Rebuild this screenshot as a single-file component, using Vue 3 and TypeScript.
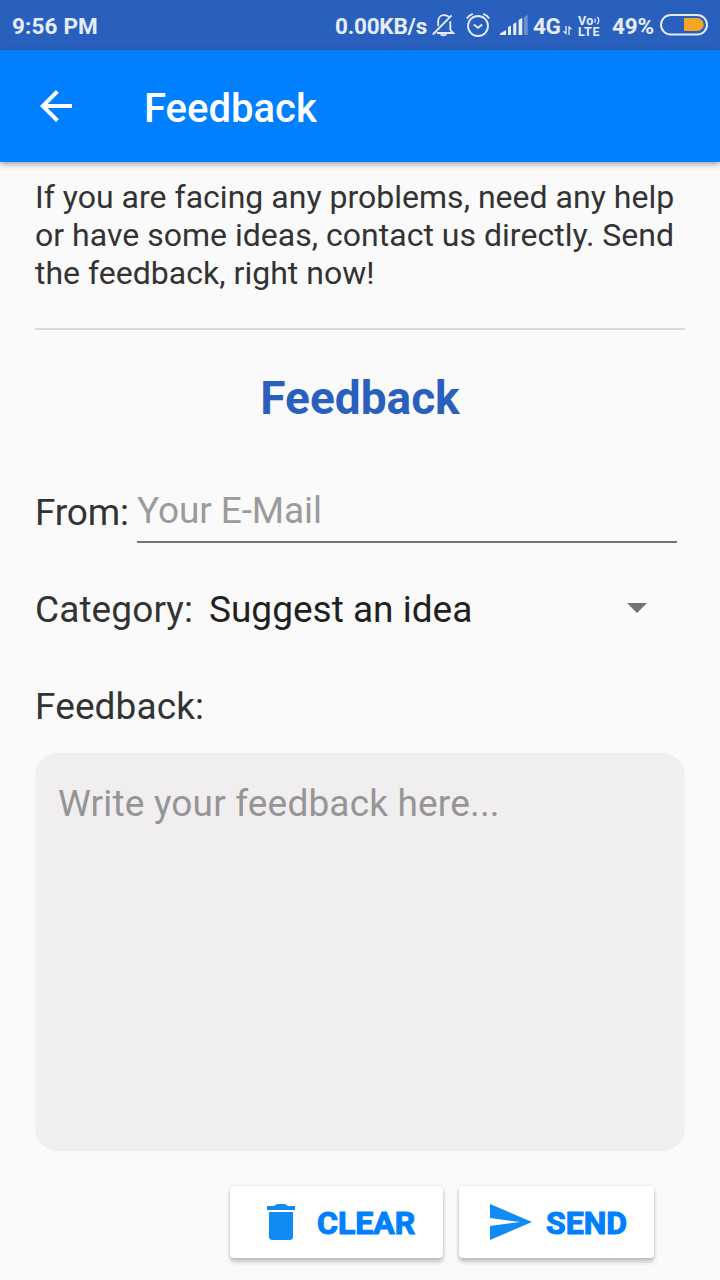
<script setup lang="ts">
import { ref } from 'vue'

const email = ref('')
const message = ref('')
const category = ref('Suggest an idea')

function clearForm(): void {
  email.value = ''
  message.value = ''
}
</script>

<template>
  <div class="screen">
    <div class="status">
      <span class="time">9:56 PM</span>
      <span class="speed">0.00KB/s</span>
      <svg class="bell" width="24" height="26" viewBox="0 0 24 26" fill="none" stroke="#e6ecf8" stroke-width="1.8">
        <path d="M17.2 4.2C15.8 2.8 14 2.2 12 2.2 8.300 2.200 6.200 5 6.200 8.500V13M4.800 20H21.300L18.300 16.800V8.200" />
        <path d="M.8 21.500L19.600 2.300" />
        <path d="M8.500 21.800H14.500Q11.500 24 8.500 21.800Z" fill="#e6ecf8" stroke-width="1" />
      </svg>
      <svg class="alarm" width="24" height="26" viewBox="0 0 24 26" fill="none" stroke="#e6ecf8" stroke-width="1.8">
        <circle cx="12" cy="14" r="10" />
        <path d="M.8 6.500Q2.800 3.200 6.800 1.900M23.200 6.500Q21.200 3.200 17.200 1.900M7.800 12.500L12 15.800 16.200 12.500" />
      </svg>
      <svg class="signal" width="28" height="20" viewBox="0 0 28 20" fill="#e6ecf8">
        <path d="M0 20V18.500L6 15V20ZM8 20V12L11 10.500V20ZM13.200 20V9L16.300 7.200V20ZM18.600 20V5L22.300 2.800V20Z" />
        <path d="M24 20V2L27.700 0V20Z" opacity=".35" />
      </svg>
      <span class="network">4G</span>
      <svg class="updown" width="9" height="9" viewBox="0 0 9 9" fill="none" stroke="#e6ecf8" stroke-width="1.300">
        <path d="M3 0V7.500L.5 5.300M6 9V1L8.500 3.300" />
      </svg>
      <span class="volte">
        <span class="vo">Vo<svg width="7" height="9" viewBox="0 0 7 9" fill="none" stroke="#e6ecf8" stroke-width="1.200"><path d="M.7 2.500Q1.900 4.500 .7 6.500M3.300 .8Q6.300 4.500 3.300 8.200" /></svg></span>
        <span class="lte">LTE</span>
      </span>
      <span class="percent">49%</span>
      <svg class="battery" width="48" height="22" viewBox="0 0 48 22">
        <rect x="1" y="1" width="46" height="19.500" rx="9.750" fill="none" stroke="#e6ecf8" stroke-width="2" />
        <path d="M25 4H37.200A6.500 6.500 0 0 1 37.200 17H25A1 1 0 0 1 24 16V5A1 1 0 0 1 25 4Z" fill="#f6a623" />
      </svg>
    </div>

    <header class="toolbar">
      <svg class="back" width="32" height="32" viewBox="4 4 16 16" fill="#fff">
        <path d="M20 11H7.830l5.590-5.590L12 4l-8 8 8 8 1.410-1.410L7.830 13H20v-2z" />
      </svg>
      <h1>Feedback</h1>
    </header>

    <main>
      <p class="intro">If you are facing any problems, need any help<br>or have some ideas, contact us directly. Send<br>the feedback, right now!</p>
      <h2>Feedback</h2>
      <label class="row from">
        <span>From:</span>
        <input v-model="email" type="email" placeholder="Your E-Mail">
      </label>
      <div class="row category">
        <span class="category-label">Category:</span>
        <span class="value">{{ category }}</span>
        <svg width="20" height="10" viewBox="0 0 20 10"><path d="M0 0H20L10 10Z" fill="#737373" /></svg>
      </div>
      <label class="row message-label" for="message">Feedback:</label>
      <textarea id="message" v-model="message" placeholder="Write your feedback here..." />
      <div class="actions">
        <button class="clear" type="button" @click="clearForm">
          <svg width="28" height="36" viewBox="0 0 28 36" fill="#118bf4">
            <path d="M0 2H7Q9 0 11 0H17Q19 0 21 2H28V6H0ZM2 8H26V32.500Q26 36 22.500 36H5.500Q2 36 2 32.500Z" />
          </svg>
          <span>CLEAR</span>
        </button>
        <button class="send" type="button">
          <svg width="42" height="36" viewBox="0 0 42 36" fill="#118bf4">
            <path d="M0 0L42 18 0 36V22L30 18 0 14Z" />
          </svg>
          <span>SEND</span>
        </button>
      </div>
    </main>
  </div>
</template>

<style>
body { margin: 0; background: #fafafa; }
</style>

<style scoped>
.screen {
  width: 720px;
  height: 1280px;
  overflow: hidden;
  background: #fafafa;
  color: #333;
  font-family: Roboto, sans-serif;
}
.status {
  height: 50px;
  box-sizing: border-box;
  padding: 0 12px;
  display: flex;
  align-items: center;
  background: #2a60bd;
  color: #e6ecf8;
  font-size: 22.5px;
  font-weight: 700;
  line-height: 50px;
  white-space: nowrap;
}
.status svg { flex: none; }
.time { flex: none; width: 323px; padding-top: 1px; letter-spacing: .15px; }
.speed { flex: none; width: 97px; padding-top: 1px; letter-spacing: -.22px; }
.bell { margin-top: 1px; }
.alarm { margin-left: 9.5px; }
.signal { align-self: flex-start; margin: 15px 0 0 10.5px; }
.network { width: 30px; margin-left: 5px; padding-top: 1px; flex: none; letter-spacing: -.3px; }
.updown { margin-top: 10px; }
.volte { width: 24px; margin: 1px 0 0 6px; flex: none; font-size: 12.5px; line-height: 11px; }
.vo, .lte { display: block; height: 11px; }
.vo { letter-spacing: .3px; }
.vo svg { margin-left: .5px; }
.lte { letter-spacing: .7px; }
.percent { width: 42px; margin-left: 10px; padding-top: 1px; flex: none; letter-spacing: -.1px; }
.battery { margin-left: 6px; }
.toolbar {
  position: relative;
  height: 112px;
  display: flex;
  align-items: center;
  padding-left: 40px;
  background: #0080ff;
  color: #fff;
  box-shadow: 0 2px 6px rgba(0, 0, 0, .38);
}
.toolbar h1 { margin: 5px 0 0 72px; font-size: 40px; font-weight: 500; line-height: 49px; }
main { padding: 16px 35px 0; }
.intro {
  height: 150px;
  margin: 0;
  border-bottom: 2px solid #dadada;
  font-size: 32px;
  line-height: 38px;
  letter-spacing: .015px;
  white-space: nowrap;
}
h2 { margin: 41px 0 0; color: #2a60bd; font-size: 46px; font-weight: 700; line-height: 54px; text-align: center; }
.row { display: flex; font-size: 37px; line-height: 44px; white-space: nowrap; }
.from { height: 78px; margin-top: 40px; align-items: center; }
.from span { width: 102px; padding-top: 17px; letter-spacing: -.15px; }
input {
  width: 540px;
  height: 60px;
  align-self: flex-end;
  box-sizing: border-box;
  padding: 0 0 3px;
  border: 0;
  border-bottom: 2px solid #737373;
  border-radius: 0;
  outline: 0;
  background: transparent;
  color: #222;
  font: 37px/44px Roboto, sans-serif;
  letter-spacing: -.1px;
}
input::placeholder { color: #9b9b9b; opacity: 1; }
.category { height: 44px; margin-top: 45px; align-items: center; }
.category-label { width: 158px; letter-spacing: .1px; }
.category .value { width: 418px; margin-left: 16px; color: #212121; }
.category svg { margin: -4px 0 0; }
.message-label { margin-top: 53px; letter-spacing: .1px; }
textarea {
  display: block;
  width: 650px;
  height: 398px;
  margin: 24px 0 0;
  box-sizing: border-box;
  padding: 29px 23px;
  border: 0;
  border-radius: 23px;
  outline: 0;
  resize: none;
  background: #f0eeef;
  color: #222;
  font: 37px/44px Roboto, sans-serif;
  letter-spacing: .17px;
}
textarea::placeholder { color: #969595; opacity: 1; }
.actions { display: flex; gap: 16px; margin: 35px 0 0 195px; }
button {
  height: 72px;
  display: flex;
  align-items: center;
  padding: 0;
  border: 0;
  border-radius: 4px;
  background: #fff;
  color: #0080ff;
  box-shadow: 0 4px 4px rgba(0, 0, 0, .22), 0 0 3px rgba(0, 0, 0, .12);
  font: 700 32px/38px Roboto, sans-serif;
}
button span { padding-top: 1px; -webkit-text-stroke: 1.1px #0080ff; }
.clear { width: 213px; padding-left: 37px; }
.clear span { margin-left: 22px; }
.send { width: 195px; padding-left: 31px; }
.send span { margin-left: 14px; }
</style>
